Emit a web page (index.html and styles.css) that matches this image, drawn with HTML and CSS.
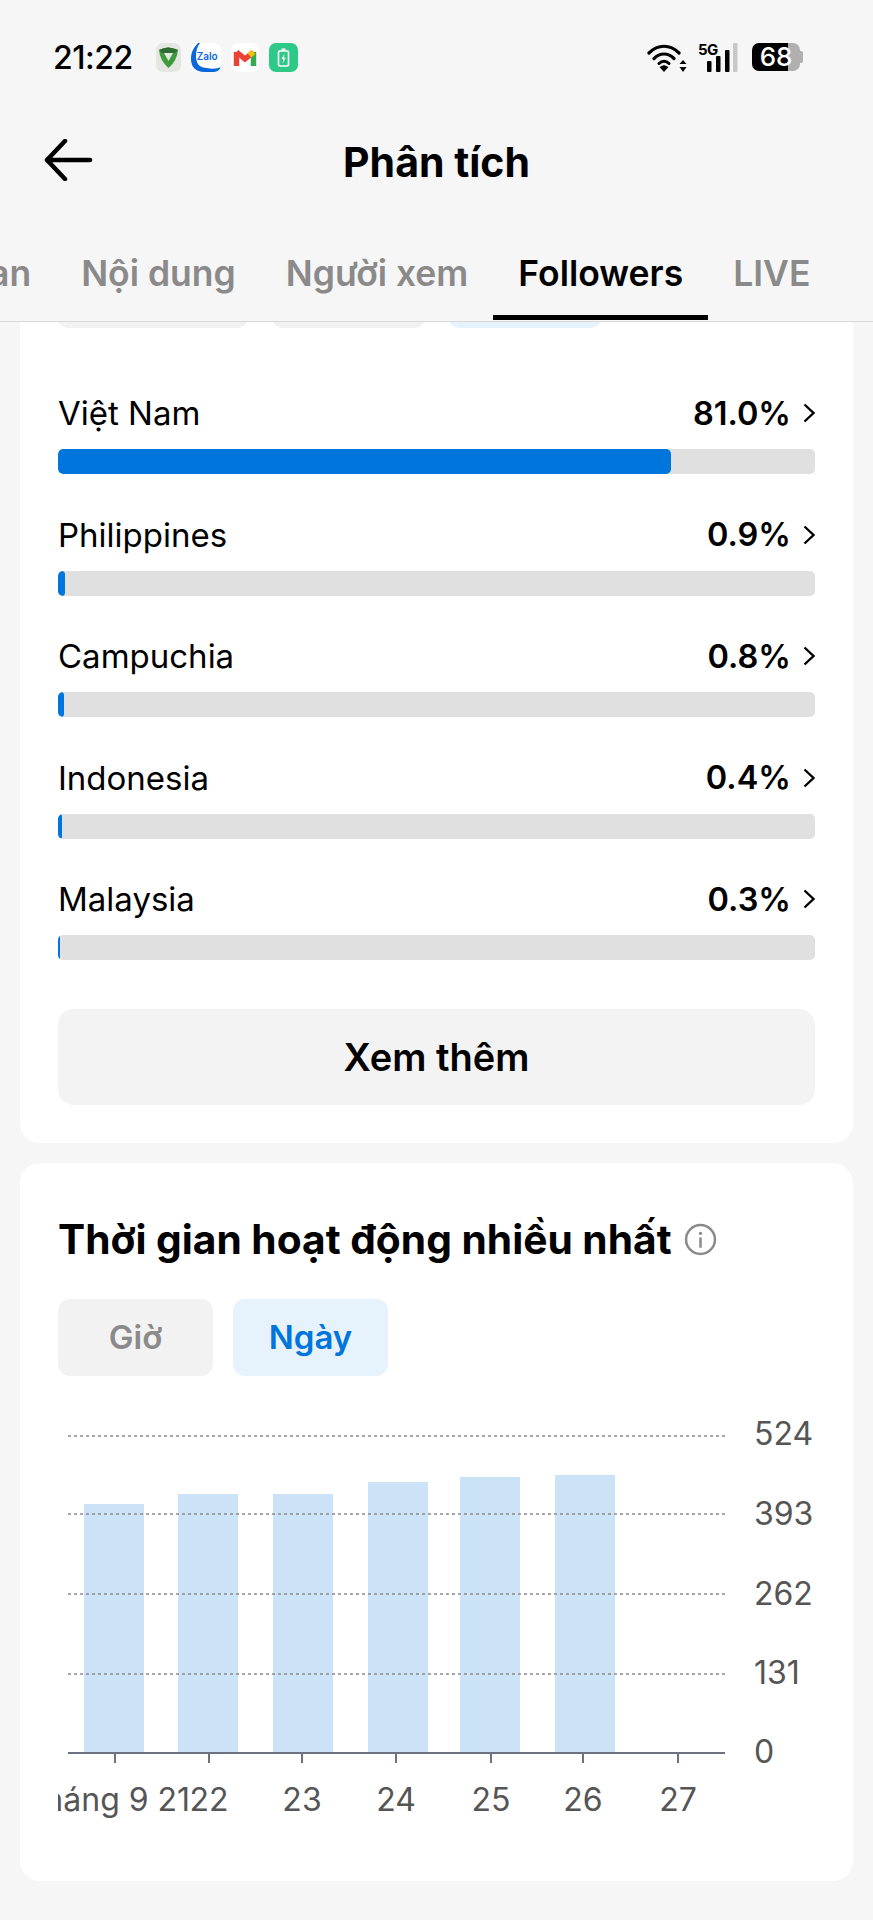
FILE: index.html
```html
<!DOCTYPE html>
<html lang="vi">
<head>
    <meta charset="UTF-8">
    <meta name="viewport" content="width=device-width, initial-scale=1.0">
    <title>Phân tích</title>
    <link rel="stylesheet" href="styles.css">
</head>
<body>
    <!-- Status bar -->
    <div class="status-bar">
        <div class="status-left">
            <span class="clock">21:22</span>
            <div class="app-icons">
                <div class="app-icon app-bank">
                    <svg viewBox="0 0 25 29" width="25" height="29"><path d="M3 7 Q12 2 22 7 Q21 18 12.5 25 Q4 18 3 7Z" fill="#3f9a3c"/><path d="M8 10 H17 L12.500 18Z" fill="#e4e9e2"/><path d="M3 7 Q12 2 22 7 L19 10 H6Z" fill="#2c6e33"/></svg>
                </div>
                <div class="app-icon app-zalo">
                    <svg class="zalo-mark" viewBox="0 0 30 29" width="30" height="29"><path d="M7 0 C2 5 0 10 0 16 C0 24 5 29 13 29 H24 C27 29 29 27 30 24 C26 26 20 26 16 25 C8 25 5 20 5 13 C5 8 6 4 9 0Z" fill="#0b68dc"/></svg>
                    <span class="zalo-text">Zalo</span>
                </div>
                <div class="app-icon app-gmail">
                    <svg viewBox="0 0 28 29" width="28" height="29"><path d="M5.500 23 V9" stroke="#ea4335" stroke-width="5.500" fill="none"/><path d="M5.500 9 L14 16 L22.500 9" stroke="#ea4335" stroke-width="5.500" fill="none"/><path d="M22.500 23 V9" stroke="#34a853" stroke-width="5.500" fill="none"/><path d="M18.500 12.500 L22.500 9" stroke="#fbbc04" stroke-width="5.500" fill="none"/></svg>
                </div>
                <div class="app-icon app-charge">
                    <svg viewBox="0 0 29 29" width="29" height="29"><rect x="9.500" y="8" width="10" height="15" rx="1.500" fill="none" stroke="#fff" stroke-width="1.600"/><rect x="12.500" y="5.500" width="4" height="2" fill="#fff"/><path d="M15.500 10.500 L12.500 16 H14.500 L13.500 20.500 L16.800 14.800 H14.800Z" fill="#fff"/></svg>
                </div>
            </div>
        </div>
        <div class="status-right">
            <svg viewBox="0 0 40 29" width="40" height="29">
                <path d="M2 10 C11 1 23 1 32 10" fill="none" stroke="#000" stroke-width="3.200" stroke-linecap="round"/>
                <path d="M7 15.500 C13 9.500 21 9.500 27 15.500" fill="none" stroke="#000" stroke-width="3.200" stroke-linecap="round"/>
                <path d="M12 20.500 C15 17.500 19 17.500 22 20.500" fill="none" stroke="#000" stroke-width="3" stroke-linecap="round"/>
                <path d="M17 29 L12.500 24 L17 22 L21.500 24Z" fill="#000"/>
                <path d="M36 17 L39.500 21 H32.500Z" fill="#000"/>
                <path d="M36 29 L39.500 24 H32.500Z" fill="#000"/>
            </svg>
            <div class="signal">
                <span class="net-type">5G</span>
                <svg viewBox="0 0 32 29" width="32" height="29">
                    <rect x="1" y="18" width="4.500" height="11" rx="1" fill="#000"/>
                    <rect x="10" y="13" width="4.500" height="16" rx="1" fill="#000"/>
                    <rect x="19" y="7" width="4.500" height="22" rx="1" fill="#000"/>
                    <rect x="27" y="0" width="4.500" height="29" rx="1" fill="#c8c8c8"/>
                </svg>
            </div>
            <div class="battery">68</div>
        </div>
    </div>

    <!-- Header -->
    <header class="nav">
        <button class="back-btn">
            <svg viewBox="0 0 50 42" width="50" height="42"><path d="M47 21 H4 M22 2 L4 21 L22 40" fill="none" stroke="#000" stroke-width="4.500" stroke-linecap="round" stroke-linejoin="round"/></svg>
        </button>
        <h1 class="nav-title">Phân tích</h1>
    </header>

    <!-- Tabs -->
    <nav class="tabs">
        <div class="tab-strip">
            <div class="tab">Tổng quan</div>
            <div class="tab">Nội dung</div>
            <div class="tab">Người xem</div>
            <div class="tab active">Followers</div>
            <div class="tab">LIVE</div>
        </div>
    </nav>

    <main class="content">
        <section class="card card-regions">
            <div class="chips">
                <div class="chip chip-a"></div>
                <div class="chip chip-b"></div>
                <div class="chip chip-c"></div>
            </div>

            <div class="rows">
                <div class="row">
                    <div class="row-head">
                        <span class="row-name">Việt Nam</span>
                        <span class="row-value">81.0%</span>
                        <svg class="chevron" viewBox="0 0 12 20" width="12" height="20"><path d="M1.500 1.500 L10.500 10 L1.500 18.500" fill="none" stroke="#000" stroke-width="2.400"/></svg>
                    </div>
                    <div class="bar"><div class="bar-fill" style="width: 613px"></div></div>
                </div>
                <div class="row">
                    <div class="row-head">
                        <span class="row-name">Philippines</span>
                        <span class="row-value">0.9%</span>
                        <svg class="chevron" viewBox="0 0 12 20" width="12" height="20"><path d="M1.500 1.500 L10.500 10 L1.500 18.500" fill="none" stroke="#000" stroke-width="2.400"/></svg>
                    </div>
                    <div class="bar"><div class="bar-fill" style="width: 7px"></div></div>
                </div>
                <div class="row">
                    <div class="row-head">
                        <span class="row-name">Campuchia</span>
                        <span class="row-value">0.8%</span>
                        <svg class="chevron" viewBox="0 0 12 20" width="12" height="20"><path d="M1.500 1.500 L10.500 10 L1.500 18.500" fill="none" stroke="#000" stroke-width="2.400"/></svg>
                    </div>
                    <div class="bar"><div class="bar-fill" style="width: 6px"></div></div>
                </div>
                <div class="row">
                    <div class="row-head">
                        <span class="row-name">Indonesia</span>
                        <span class="row-value">0.4%</span>
                        <svg class="chevron" viewBox="0 0 12 20" width="12" height="20"><path d="M1.500 1.500 L10.500 10 L1.500 18.500" fill="none" stroke="#000" stroke-width="2.400"/></svg>
                    </div>
                    <div class="bar"><div class="bar-fill" style="width: 4px"></div></div>
                </div>
                <div class="row">
                    <div class="row-head">
                        <span class="row-name">Malaysia</span>
                        <span class="row-value">0.3%</span>
                        <svg class="chevron" viewBox="0 0 12 20" width="12" height="20"><path d="M1.500 1.500 L10.500 10 L1.500 18.500" fill="none" stroke="#000" stroke-width="2.400"/></svg>
                    </div>
                    <div class="bar"><div class="bar-fill" style="width: 2px"></div></div>
                </div>
            </div>

            <button class="more-btn">Xem thêm</button>
        </section>

        <section class="card card-activity">
            <div class="card-title-row">
                <h2 class="card-title">Thời gian hoạt động nhiều nhất</h2>
                <svg class="info-icon" viewBox="0 0 32 32" width="33" height="33">
                    <circle cx="16" cy="16" r="14" fill="none" stroke="#8a8a8a" stroke-width="2.400"/>
                    <rect x="14.800" y="14" width="2.400" height="10" fill="#8a8a8a"/>
                    <circle cx="16" cy="10" r="1.600" fill="#8a8a8a"/>
                </svg>
            </div>

            <div class="pills">
                <div class="pill">Giờ</div>
                <div class="pill active">Ngày</div>
            </div>

            <!-- viewBox uses page coordinates so the numbers read straight off the design -->
            <svg class="chart" viewBox="58 1400 757 440" width="757" height="440">
                <g class="chart-bars">
                    <rect x="84" y="1504" width="60" height="249"/>
                    <rect x="178" y="1494" width="60" height="258"/>
                    <rect x="273" y="1494" width="60" height="259"/>
                    <rect x="368" y="1482" width="60" height="271"/>
                    <rect x="460" y="1477" width="60" height="276"/>
                    <rect x="555" y="1475" width="60" height="278"/>
                </g>
                <g class="chart-grid">
                    <line x1="68" y1="1436" x2="725" y2="1436"/>
                    <line x1="68" y1="1514" x2="725" y2="1514"/>
                    <line x1="68" y1="1594" x2="725" y2="1594"/>
                    <line x1="68" y1="1674" x2="725" y2="1674"/>
                </g>
                <g class="chart-axis">
                    <line x1="68" y1="1753" x2="725" y2="1753"/>
                    <line x1="115" y1="1753" x2="115" y2="1763"/>
                    <line x1="209" y1="1753" x2="209" y2="1763"/>
                    <line x1="302" y1="1753" x2="302" y2="1763"/>
                    <line x1="396" y1="1753" x2="396" y2="1763"/>
                    <line x1="491" y1="1753" x2="491" y2="1763"/>
                    <line x1="583" y1="1753" x2="583" y2="1763"/>
                    <line x1="678" y1="1753" x2="678" y2="1763"/>
                </g>
                <g class="chart-y">
                    <text x="754" y="1445">524</text>
                    <text x="754" y="1525">393</text>
                    <text x="754" y="1605">262</text>
                    <text x="754" y="1684">131</text>
                    <text x="754" y="1763">0</text>
                </g>
                <g class="chart-x">
                    <text x="112" y="1811">tháng 9 21</text>
                    <text x="209" y="1811">22</text>
                    <text x="302" y="1811">23</text>
                    <text x="396" y="1811">24</text>
                    <text x="491" y="1811">25</text>
                    <text x="583" y="1811">26</text>
                    <text x="678" y="1811">27</text>
                </g>
            </svg>
        </section>
    </main>
</body>
</html>
```

FILE: styles.css
```css
* {
    box-sizing: border-box;
}
body {
    font-family: Inter, "Noto Sans", sans-serif;
    background-color: #f6f6f6;
    color: #000;
    margin: 0;
    padding: 0;
    width: 873px;
    height: 1920px;
    overflow: hidden;
}

/* Status bar */
.status-bar {
    height: 114px;
    padding: 0 70px 0 53px;
    display: flex;
    justify-content: space-between;
    align-items: center;
}
.status-left {
    display: flex;
    align-items: center;
    gap: 23px;
}
.clock {
    font-size: 32px;
    font-weight: 500;
    letter-spacing: -0.5px;
}
.app-icons {
    display: flex;
    gap: 10px;
}
.app-icon {
    width: 28px;
    height: 29px;
    border-radius: 7px;
    overflow: hidden;
    position: relative;
}
.app-bank {
    background-color: #e3e6e1;
    width: 25px;
}
.app-zalo {
    background-color: #fff;
    width: 30px;
}
.zalo-mark {
    position: absolute;
    top: 0;
    left: 0;
}
.zalo-text {
    position: absolute;
    top: 7px;
    left: 6px;
    font-size: 10px;
    font-weight: 600;
    color: #0b68dc;
}
.app-gmail {
    background-color: #fff;
}
.app-charge {
    background-color: #2ec986;
    width: 29px;
}
.status-right {
    display: flex;
    align-items: center;
    gap: 11px;
}
.signal {
    position: relative;
    width: 40px;
    height: 29px;
    display: flex;
    justify-content: flex-end;
}
.net-type {
    position: absolute;
    top: -3px;
    left: 0;
    font-size: 15px;
    font-weight: 700;
    letter-spacing: -0.5px;
}
.battery {
    position: relative;
    width: 48px;
    height: 28px;
    margin: 0 3px 0 3px;
    border-radius: 7px;
    background: linear-gradient(to right, #000 36px, #b0b0b0 36px);
    color: #fff;
    font-size: 26px;
    font-weight: 500;
    line-height: 28px;
    text-align: center;
}
.battery::after {
    content: "";
    position: absolute;
    top: 8px;
    right: -3px;
    width: 3px;
    height: 12px;
    border-radius: 0 2px 2px 0;
    background-color: #b0b0b0;
}

/* Header */
.nav {
    height: 96px;
    display: flex;
    align-items: center;
    justify-content: center;
    position: relative;
}
.back-btn {
    position: absolute;
    left: 43px;
    top: 25px;
    padding: 0;
    border: none;
    background: none;
    line-height: 0;
}
.nav-title {
    margin: 0;
    font-size: 41px;
    font-weight: 700;
}

/* Tabs */
.tabs {
    height: 112px;
    border-bottom: 1px solid #d9d9d9;
    overflow: hidden;
}
.tab-strip {
    display: flex;
    margin-left: -175px;
    white-space: nowrap;
}
.tab {
    padding: 0 25px;
    height: 110px;
    line-height: 128px;
    font-size: 35.500px;
    font-weight: 600;
    color: #8a8a8a;
    border-bottom: 5px solid transparent;
}
.tab.active {
    color: #000;
    border-bottom-color: #000;
}

/* Cards */
.content {
    padding: 0 20px;
    display: flex;
    flex-direction: column;
    gap: 20px;
}
.card {
    background-color: #fff;
    padding: 0 38px;
}
.card-regions {
    height: 821px;
    border-radius: 0 0 20px 20px;
}
.card-activity {
    height: 718px;
    padding-top: 52px;
    border-radius: 20px;
}
.chips {
    display: flex;
    gap: 24px;
    height: 6px;
    overflow: hidden;
    align-items: flex-end;
}
.chip {
    height: 60px;
    flex-shrink: 0;
    border-radius: 10px;
    background-color: #f2f2f2;
}
.chip-a {
    width: 190px;
}
.chip-b {
    width: 153px;
}
.chip-c {
    width: 152px;
    background-color: #e6f2fc;
}

/* Country rows */
.rows {
    padding-top: 66px;
    display: flex;
    flex-direction: column;
    gap: 41.500px;
}
.row-head {
    height: 38px;
    margin-bottom: 17px;
    display: flex;
    align-items: center;
}
.row-name {
    font-size: 33px;
    flex: 1;
}
.row-value {
    font-size: 32.500px;
    font-weight: 600;
    margin-right: 12px;
}
.chevron {
    flex-shrink: 0;
}
.bar {
    height: 25px;
    border-radius: 5px;
    background-color: #e0e0e0;
    overflow: hidden;
}
.bar-fill {
    height: 100%;
    border-radius: 5px;
    background-color: #0075db;
}
.more-btn {
    display: block;
    width: 100%;
    height: 96px;
    margin-top: 49px;
    border: none;
    border-radius: 16px;
    background-color: #f3f3f3;
    font-family: inherit;
    font-size: 38px;
    font-weight: 600;
    color: #000;
}

/* Activity card */
.card-title-row {
    height: 48px;
    display: flex;
    align-items: center;
    gap: 12px;
}
.card-title {
    margin: 0;
    font-size: 40.700px;
    font-weight: 700;
    white-space: nowrap;
}
.pills {
    display: flex;
    gap: 20px;
    margin-top: 36px;
}
.pill {
    width: 155px;
    height: 77px;
    border-radius: 12px;
    background-color: #f2f2f2;
    color: #8a8a8a;
    font-size: 33px;
    font-weight: 600;
    line-height: 77px;
    text-align: center;
}
.pill.active {
    background-color: #e6f2fc;
    color: #0075db;
}

/* Chart */
.chart {
    display: block;
    margin-top: 24px;
    overflow: hidden;
}
.chart-bars rect {
    fill: #cce2f6;
}
.chart-grid line {
    stroke: #8a8a8a;
    stroke-width: 1.500;
    stroke-dasharray: 3 3;
}
.chart-axis line {
    stroke: #6e7280;
    stroke-width: 2;
}
.chart-y text {
    font-size: 32px;
    fill: #555;
}
.chart-x text {
    font-size: 32px;
    fill: #555;
    text-anchor: middle;
}
```
